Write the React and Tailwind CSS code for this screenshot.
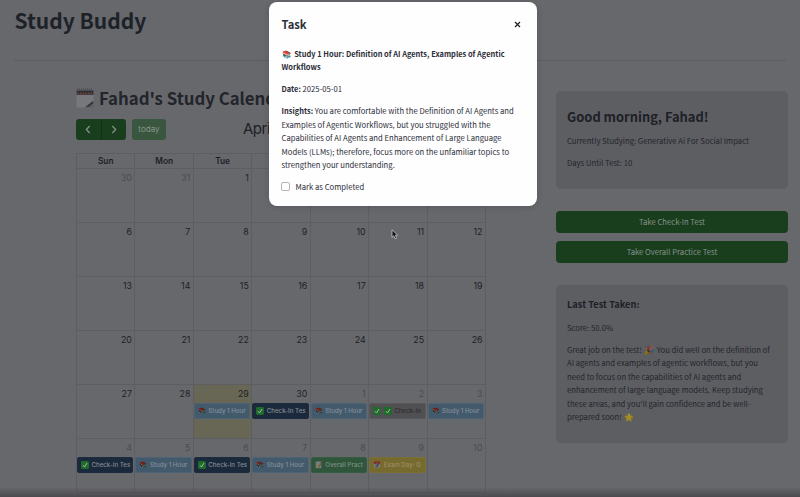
import React from "react";

const HEADERS = ["Sun", "Mon", "Tue", "Wed", "Thu", "Fri", "Sat"];

const KINDS = {
  study: { box: "bg-[#435a6d] border-[#4c6276] text-[#848e97]", icons: ["📚"], label: "Study 1 Hour" },
  check: { box: "bg-[#1a293c] border-[#1c2b3d] text-[#868c93]", icons: ["check"], label: "Check-In Tes" },
  done: { box: "bg-[#505052] border-[#5a5a5c] text-[#2c2d30]", icons: ["check", "check"], label: "Check-In" },
  overall: { box: "bg-[#2f563a] border-[#345c40] text-[#7d8d83]", icons: ["📝"], label: "Overall Pract" },
  exam: { box: "bg-[#776a2f] border-[#7c6f36] text-[#989067]", icons: ["📅"], label: "Exam Day: G" },
};

const WEEKS = [
  [{ d: 30, out: true }, { d: 31, out: true }, { d: 1 }, { d: 2 }, { d: 3 }, { d: 4 }, { d: 5 }],
  [{ d: 6 }, { d: 7 }, { d: 8 }, { d: 9 }, { d: 10 }, { d: 11 }, { d: 12 }],
  [{ d: 13 }, { d: 14 }, { d: 15 }, { d: 16 }, { d: 17 }, { d: 18 }, { d: 19 }],
  [{ d: 20 }, { d: 21 }, { d: 22 }, { d: 23 }, { d: 24 }, { d: 25 }, { d: 26 }],
  [
    { d: 27 },
    { d: 28 },
    { d: 29, today: true, ev: "study" },
    { d: 30, ev: "check" },
    { d: 1, out: true, ev: "study" },
    { d: 2, out: true, ev: "done" },
    { d: 3, out: true, ev: "study" },
  ],
  [
    { d: 4, out: true, ev: "check" },
    { d: 5, out: true, ev: "study" },
    { d: 6, out: true, ev: "check" },
    { d: 7, out: true, ev: "study" },
    { d: 8, out: true, ev: "overall" },
    { d: 9, out: true, ev: "exam" },
    { d: 10, out: true },
  ],
];

function CheckIcon() {
  return (
    <svg className="mr-[2.5px] shrink-0" width="8" height="8" viewBox="0 0 8 8">
      <rect width="8" height="8" rx="1.4" fill="#1e6b2a" />
      <path d="M2 4.3 3.5 6 6 2" fill="none" stroke="#a9b4aa" strokeWidth="1" />
    </svg>
  );
}

function NotepadIcon() {
  return (
    <svg className="mr-[5px] shrink-0" width="18" height="20" viewBox="0 0 18 20">
      <path d="M.5 3h17v11l-5 5.5H.5z" fill="#77787b" />
      <path d="M.5 2.5h17v4.3H.5z" fill="#303136" />
      <path d="M1 1.7h16" stroke="#4a4b4f" strokeWidth="2.4" strokeDasharray="1 1" />
      <path d="M1.5 5.4h15" stroke="#8a4630" strokeWidth="1.3" strokeDasharray="1.4 1.2" />
      <path d="M17.5 13.5v6H9l4.5-1.7z" fill="#5f6064" />
      <path d="M9 19.3 16.8 13l.7 2-4.6 3.8z" fill="#35363a" />
    </svg>
  );
}

function Event({ kind }) {
  const k = KINDS[kind];
  return (
    <div className={`mr-px mt-[4px] flex h-4 items-center whitespace-nowrap rounded-[2px] border pl-[3px] text-[6.15px] leading-[10px] font-medium ${k.box}`}>
      {k.icons.map((icon, i) =>
        icon === "check" ? <CheckIcon key={i} /> : <span key={i} className="mr-[2.5px] w-[8px] shrink-0 text-[6.4px] brightness-[.5]">{icon}</span>
      )}
      <span>{k.label}</span>
    </div>
  );
}

function Day({ day }) {
  return (
    <div className={`min-w-0 border-r border-b border-[#5d5e62] ${day.today ? "bg-[#686655]" : ""}`}>
      <div className={`h-[14px] pt-[3px] pr-[2.5px] text-right text-[8.8px] leading-[12px] ${day.out ? "text-[#4a4b50]" : "text-[#1c1f25]"}`}>
        {day.d}
      </div>
      {day.ev && <Event kind={day.ev} />}
    </div>
  );
}

function Calendar() {
  return (
    <section className="w-[410px] shrink-0">
      <h2 className="flex h-[22px] items-center whitespace-nowrap pt-px text-[16.8px] leading-[22px] font-bold text-[#22252b]">
        <NotepadIcon />
        Fahad's Study Calendar
      </h2>
      <div className="mt-[10.6px] flex h-[21px] items-center font-['Inter',sans-serif]">
        <div className="flex h-[21px] w-[50px] overflow-hidden rounded-[3px] bg-[#183e1e] text-[#8a938c]">
          <button className="flex flex-1 items-center justify-center border-r border-[#123218]">
            <svg width="6" height="9" viewBox="0 0 6 9" fill="none" stroke="currentColor" strokeWidth="1.2"><path d="M4.7 1 1.3 4.5 4.7 8" /></svg>
          </button>
          <button className="flex flex-1 items-center justify-center">
            <svg width="6" height="9" viewBox="0 0 6 9" fill="none" stroke="currentColor" strokeWidth="1.2"><path d="M1.3 1 4.7 4.5 1.3 8" /></svg>
          </button>
        </div>
        <button className="ml-[6px] h-[21px] w-[34px] rounded-[3px] bg-[#39563f] text-[8.1px] text-[#87948a]">today</button>
        <div className="ml-[77px] pt-px text-[15px] tracking-[-0.5px] text-[#1d2026]">April 2025</div>
      </div>
      <div className="mt-[13.4px] border-t border-l border-[#5d5e62] font-['Inter',sans-serif]">
        <div className="grid grid-cols-7">
          {HEADERS.map((h) => (
            <div key={h} className="h-[15px] border-r border-b border-[#5d5e62] text-center text-[8.3px] leading-[15px] font-semibold text-[#1c1f25]">{h}</div>
          ))}
        </div>
        {WEEKS.map((w, i) => (
          <div key={i} className="grid h-[54px] grid-cols-7">
            {w.map((d, j) => <Day key={j} day={d} />)}
          </div>
        ))}
      </div>
    </section>
  );
}

function Sidebar() {
  return (
    <aside className="w-[232px] shrink-0 pt-[5px] text-[7.69px] leading-[13.4px] text-[#22252c]">
      <div className="h-[98px] rounded-[5px] bg-[#5d5e62] px-[11px] pt-[17px]">
        <h3 className="text-[12.9px] leading-[18px] font-bold text-[#1d2026]">Good morning, Fahad!</h3>
        <p className="mt-[8px]">Currently Studying: Generative Ai For Social Impact</p>
        <p className="mt-[8.5px]">Days Until Test: 10</p>
      </div>
      <div className="mt-[22px] flex flex-col gap-[8px] text-[#88918a]">
        <button className="h-[22px] rounded-[4px] bg-[#183e1e]">Take Check-In Test</button>
        <button className="h-[22px] rounded-[4px] bg-[#183e1e]">Take Overall Practice Test</button>
      </div>
      <div className="mt-[22px] h-[158px] rounded-[5px] bg-[#5d5e62] px-[11px] pt-[12px]">
        <h4 className="text-[9.3px] leading-[14px] font-bold text-[#1d2026]">Last Test Taken:</h4>
        <p className="mt-[10px]">Score: 50.0%</p>
        <p className="mt-[8.5px] whitespace-nowrap">
          Great job on the test! <span className="mr-px inline-block w-[10.5px] text-[8.6px] leading-[10px] brightness-[.58]">🎉</span> You did well on the definition of<br />
          AI agents and examples of agentic workflows, but you<br />
          need to focus on the capabilities of AI agents and<br />
          enhancement of large language models. Keep studying<br />
          these areas, and you'll gain confidence and be well-<br />
          prepared soon! <span className="ml-px inline-block text-[7.8px] leading-[10px] brightness-[.65]">🌟</span>
        </p>
      </div>
    </aside>
  );
}

function TaskDialog() {
  return (
    <div role="dialog" className="absolute top-[2px] left-[268.5px] h-[204px] w-[268px] rounded-[8px] bg-[#fefefe] px-[13px] pt-[14px] text-[7.69px] leading-[13.4px] text-[#2b2d38] shadow-[0_1px_6px_rgba(0,0,0,.15)]">
      <div className="flex items-center justify-between">
        <h2 className="text-[11.2px] leading-[17px] font-bold">Task</h2>
        <svg className="mr-[3px]" width="7" height="7" viewBox="0 0 7 7" stroke="#1f2129" strokeWidth="1.2"><path d="M1 1 6 6M6 1 1 6" /></svg>
      </div>
      <p className="mt-[14px] whitespace-nowrap text-[7.46px] font-bold">
        <span className="mr-[2px]">📚</span> Study 1 Hour: Definition of AI Agents, Examples of Agentic<br />Workflows
      </p>
      <p className="mt-[8.6px]"><b className="text-[7.46px]">Date:</b> 2025-05-01</p>
      <p className="mt-[8.6px] whitespace-nowrap">
        <b className="text-[7.46px]">Insights:</b> You are comfortable with the Definition of AI Agents and<br />
        Examples of Agentic Workflows, but you struggled with the<br />
        Capabilities of AI Agents and Enhancement of Large Language<br />
        Models (LLMs); therefore, focus more on the unfamiliar topics to<br />
        strengthen your understanding.
      </p>
      <label className="mt-[8.6px] -ml-[0.5px] flex items-center">
        <span className="mr-[5.5px] h-[9px] w-[9px] rounded-[2px] border border-[#b4b5ba] bg-white" />
        Mark as Completed
      </label>
    </div>
  );
}

export default function App() {
  return (
    <div className="relative h-[497px] w-[800px] overflow-hidden bg-[#67686c] font-['Noto_Sans_CJK_SC','Source_Sans_Pro',sans-serif]">
      <header className="mx-[14px] h-[61px] border-b border-[#5c5d61]">
        <h1 className="pt-[2.5px] pl-[0.5px] text-[21px] leading-[34px] font-bold text-[#1d2229]">Study Buddy</h1>
      </header>
      <main className="flex gap-[70px] pt-[25px] pl-[76px]">
        <Calendar />
        <Sidebar />
      </main>
      <div className="absolute inset-x-0 bottom-0 h-[10px] bg-linear-to-b from-transparent to-[#4b4b4f]" />
      <TaskDialog />
      <svg className="absolute top-[229px] left-[391px]" width="8" height="11" viewBox="0 0 8 11">
        <path d="M1 .8v7.6l1.8-1.6 1.3 3 1.5-.7-1.3-2.9h2.4z" fill="#111" stroke="#c8c8ca" strokeWidth=".8" />
      </svg>
    </div>
  );
}
